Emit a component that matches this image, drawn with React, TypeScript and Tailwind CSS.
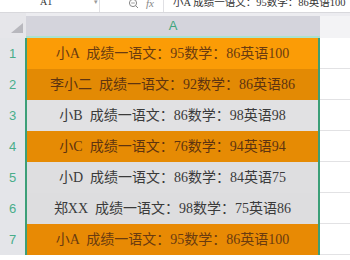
import React from "react";

type Row = { n: number; text: string; bg: string; fg: string };

const rows: Row[] = [
	{ n: 1, text: "小A  成绩一语文：95数学：86英语100", bg: "bg-[#fb9c06]", fg: "text-[#6a3b10]" },
	{ n: 2, text: "李小二  成绩一语文：92数学：86英语86", bg: "bg-[#e38a04]", fg: "text-[#5e3410]" },
	{ n: 3, text: "小B  成绩一语文：86数学：98英语98", bg: "bg-[#e1e1e3]", fg: "text-[#3a3a3a]" },
	{ n: 4, text: "小C  成绩一语文：76数学：94英语94", bg: "bg-[#e68b04]", fg: "text-[#5e3410]" },
	{ n: 5, text: "小D  成绩一语文：86数学：84英语75", bg: "bg-[#dedee0]", fg: "text-[#3a3a3a]" },
	{ n: 6, text: "郑XX  成绩一语文：98数学：75英语86", bg: "bg-[#dddddf]", fg: "text-[#3a3a3a]" },
	{ n: 7, text: "小A  成绩一语文：95数学：86英语100", bg: "bg-[#e88a04]", fg: "text-[#6a3b10]" },
];

const serif = "font-['Liberation_Serif','Noto_Sans_CJK_SC',serif]";

const App: React.FC = () => {
	return (
		<div className="w-[350px] h-[260px] overflow-hidden bg-white font-['Liberation_Sans',sans-serif]">
			{/* formula bar, cut off at the top */}
			<div className="flex h-[13px] overflow-hidden border-b border-[#d8d8dc] bg-white">
				<div className="relative w-[100px] border-r border-[#e0e0e4]">
					<span className={`absolute left-[40px] top-[-4px] text-[10px] leading-[12px] text-[#333] ${serif}`}>A1</span>
					<span className="absolute left-[94px] top-[-2px] text-[7px] leading-[8px] text-[#999]">▾</span>
				</div>
				<div className="flex w-[63px] items-start gap-[7px] pl-[28px]">
					<svg width="11" height="10" viewBox="0 0 11 10" className="-mt-[1px]">
						<circle cx="5" cy="4" r="3.6" fill="none" stroke="#888" strokeWidth="1" />
						<path d="M7.6 6.6 L10 9" stroke="#888" strokeWidth="1" />
						<path d="M3.2 4 H6.8" stroke="#888" strokeWidth="0.8" />
					</svg>
					<span className="-mt-[3px] text-[11px] leading-[13px] italic text-[#888] font-['Liberation_Serif',serif]">fx</span>
				</div>
				<div className="flex-1 overflow-hidden whitespace-nowrap border-l border-[#e0e0e4] pl-[9px]">
					<span className={`block -mt-[4px] text-[10.5px] leading-[14px] text-[#333] ${serif}`}>
						小A 成绩一语文：95数学：86英语100
					</span>
				</div>
			</div>
			{/* gap */}
			<div className="flex h-[3px]">
				<div className="w-[26px] bg-[#e6e6ea]" />
				<div className="flex-1 bg-[#ececf0]" />
			</div>
			{/* column header */}
			<div className="flex h-[20px]">
				<div className="relative w-[26px] bg-[#e6e6ea]">
					<svg width="12" height="10" viewBox="0 0 12 10" className="absolute left-[11px] top-[7px]">
						<polygon points="12,0 12,10 0,10" fill="#b8b8be" />
					</svg>
				</div>
				<div className="flex w-[294px] items-center justify-center bg-[#d4d4dc] text-[13px] text-[#3fa57c]">
					A
				</div>
				<div className="flex-1 bg-[#f3f3f5]" />
			</div>
			<div className="flex h-[2px]">
				<div className="w-[26px] bg-[#e6e6ea]" />
				<div className="w-[294px] bg-[#a9e2cf]" />
				<div className="flex-1 bg-[#f3f3f5]" />
			</div>
			{/* rows */}
			{rows.map((r) => (
				<div key={r.n} className="flex h-[31px]">
					<div className="flex w-[25px] items-center justify-center bg-[#e4e5e9] text-[13px] text-[#49ad8a]">
						{r.n}
					</div>
					<div
						className={`flex w-[295px] items-center justify-center border-x-2 border-[#3c9f78] ${r.bg} ${r.fg} text-[14px] ${serif} whitespace-pre`}
					>
						{r.text}
					</div>
					<div className="flex-1 border-b border-[#e2e2e4] bg-white" />
				</div>
			))}
		</div>
	);
};

export default App;
